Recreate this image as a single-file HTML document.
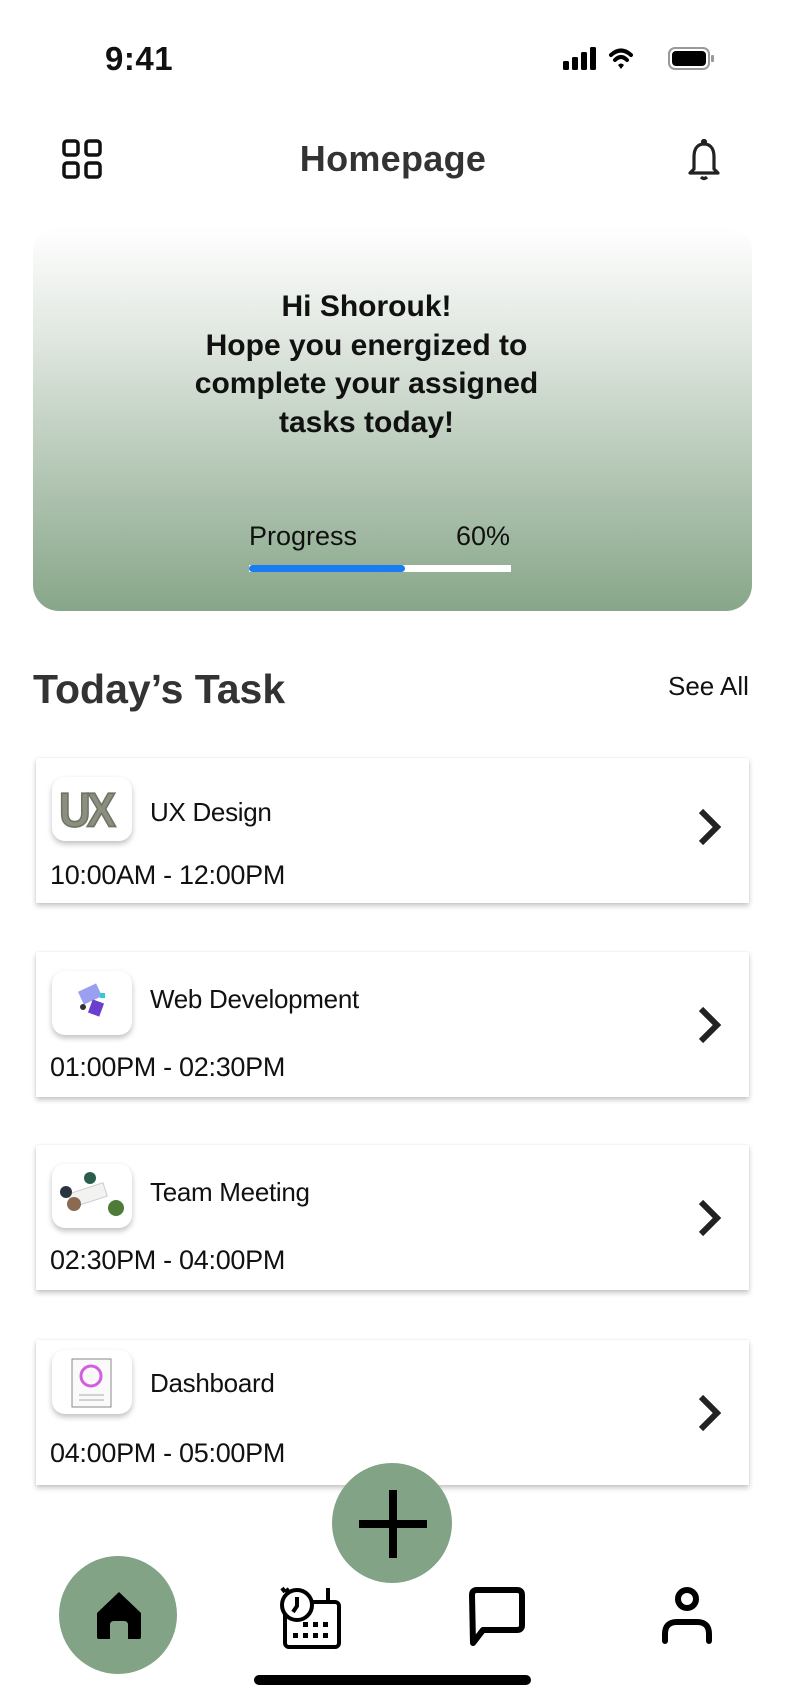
<!DOCTYPE html>
<html><head><meta charset="utf-8"><style>
*{margin:0;padding:0;box-sizing:border-box}
body{width:786px;height:1705px;background:#fff;position:relative;overflow:hidden;font-family:"Liberation Sans",sans-serif;color:#111}
.abs{position:absolute}
.hero{left:33px;top:226px;width:719px;height:385px;border-radius:26px;background:linear-gradient(180deg,#ffffff 0%,#dfe6df 30%,#b3c6b4 65%,#87a689 100%)}
.msg{left:0;width:733px;top:288px;text-align:center;font-weight:bold;font-size:30px;line-height:38.5px;color:#111}
.card{left:36px;width:713px;height:145px;background:#fff;box-shadow:0 3px 5px rgba(0,0,0,.22),0 0 2px rgba(0,0,0,.08)}
.ic{position:absolute;left:16px;top:19px;width:80px;height:64px;border-radius:13px;background:#fff;box-shadow:0 3px 6px rgba(0,0,0,.25);overflow:hidden}
.tt{position:absolute;left:114px;top:34px;font-size:26px;letter-spacing:-.3px}
.tm{position:absolute;left:14px;top:98px;font-size:27px;letter-spacing:-.3px}
.chev{position:absolute;right:26px;top:52px}
</style></head><body>
<div class="abs" style="left:105px;top:40px;font-size:33px;font-weight:bold;letter-spacing:.5px">9:41</div>
<svg class="abs" style="left:563px;top:46px" width="160" height="26" viewBox="0 0 160 26">
<rect x="0" y="15" width="6" height="9" rx="1.5" fill="#000"/><rect x="9" y="11" width="6" height="13" rx="1.5" fill="#000"/><rect x="18" y="6" width="6" height="18" rx="1.5" fill="#000"/><rect x="27" y="1" width="6" height="23" rx="1.5" fill="#000"/>
<path d="M48 9 Q58 0 68 9" stroke="#000" stroke-width="4" fill="none" stroke-linecap="round"/><path d="M52 14 Q58 8 64 14" stroke="#000" stroke-width="4" fill="none" stroke-linecap="round"/><path d="M55 19 L58 23 L61 19 Q58 16 55 19Z" fill="#000"/>
<rect x="106" y="2" width="40" height="21" rx="6" fill="none" stroke="#999" stroke-width="2"/><rect x="109" y="5" width="34" height="15" rx="4" fill="#000"/><rect x="148" y="9" width="3" height="7" rx="1" fill="#999"/>
</svg>
<svg class="abs" style="left:62px;top:139px" width="40" height="40" viewBox="0 0 40 40" fill="none" stroke="#111" stroke-width="3.5"><rect x="2" y="2" width="14" height="14" rx="3"/><rect x="24" y="2" width="14" height="14" rx="3"/><rect x="2" y="24" width="14" height="14" rx="3"/><rect x="24" y="24" width="14" height="14" rx="3"/></svg>
<div class="abs" style="left:0;width:786px;top:138px;text-align:center;font-size:36px;font-weight:bold;color:#333;letter-spacing:.3px">Homepage</div>
<svg class="abs" style="left:687px;top:139px" width="34" height="42" viewBox="0 0 34 42" fill="none" stroke="#222" stroke-width="3.2"><path d="M17 5 C9 5 7 12 7 18 L7 30 L3 34 L31 34 L27 30 L27 18 C27 12 25 5 17 5Z" stroke-linejoin="round"/><circle cx="17" cy="3" r="1.5" fill="#222"/><path d="M14 38 Q17 41 20 38"/></svg>
<div class="abs hero"></div>
<div class="abs msg">Hi Shorouk!<br>Hope you energized to<br>complete your assigned<br>tasks today!</div>
<div class="abs" style="left:249px;top:521px;font-size:27px;color:#111">Progress</div>
<div class="abs" style="left:456px;top:521px;font-size:27px;color:#111">60%</div>
<div class="abs" style="left:249px;top:565px;width:262px;height:7px;background:#fff"></div>
<div class="abs" style="left:249px;top:565px;width:156px;height:7px;background:#1a7cf2;border-radius:4px"></div>
<div class="abs" style="left:33px;top:666px;font-size:41px;font-weight:bold;color:#333">Today’s Task</div>
<div class="abs" style="left:668px;top:671px;font-size:26px;color:#111">See All</div>

<div class="abs card" style="top:758px">
<div class="ic"><svg width="80" height="64"><text x="7" y="49" font-family="Liberation Sans" font-weight="bold" font-size="44" fill="#8b8f7f" stroke="#6f7464" stroke-width="1.5" letter-spacing="-4" transform="scale(1,1.1) translate(0,-4)">UX</text></svg></div>
<div class="tt" style="top:39px">UX Design</div><div class="tm" style="top:102px">10:00AM - 12:00PM</div>
<svg class="chev" style="top:50px" width="26" height="38" viewBox="0 0 26 38"><path d="M4 3 L20 19 L4 35" stroke="#222" stroke-width="6" fill="none"/></svg></div>

<div class="abs card" style="top:952px">
<div class="ic"><svg width="80" height="64"><rect x="28" y="16" width="20" height="14" fill="#9aa0f0" transform="rotate(-25 38 23)"/><rect x="38" y="30" width="12" height="14" fill="#6a3fd0" transform="rotate(20 44 37)"/><circle cx="31" cy="36" r="3" fill="#333"/><rect x="48" y="22" width="5" height="5" fill="#3cc"/></svg></div>
<div class="tt" style="top:32px">Web Development</div><div class="tm" style="top:100px">01:00PM - 02:30PM</div>
<svg class="chev" style="top:54px" width="26" height="38" viewBox="0 0 26 38"><path d="M4 3 L20 19 L4 35" stroke="#222" stroke-width="6" fill="none"/></svg></div>

<div class="abs card" style="top:1145px">
<div class="ic"><svg width="80" height="64"><rect x="18" y="24" width="36" height="14" fill="#f2f2f0" stroke="#ccc" transform="rotate(-18 36 31)"/><circle cx="14" cy="28" r="6" fill="#2a3440"/><circle cx="38" cy="14" r="6" fill="#2b5e4a"/><circle cx="22" cy="40" r="7" fill="#8a6a50"/><circle cx="64" cy="44" r="8" fill="#4e7a3a"/></svg></div>
<div class="tt" style="top:32px">Team Meeting</div><div class="tm" style="top:100px">02:30PM - 04:00PM</div>
<svg class="chev" style="top:54px" width="26" height="38" viewBox="0 0 26 38"><path d="M4 3 L20 19 L4 35" stroke="#222" stroke-width="6" fill="none"/></svg></div>

<div class="abs card" style="top:1340px">
<div class="ic" style="top:10px"><svg width="80" height="64"><rect x="20" y="9" width="39" height="48" fill="#fafafa" stroke="#888"/><circle cx="39" cy="26" r="10" fill="none" stroke="#d45ee0" stroke-width="3"/><line x1="27" y1="45" x2="52" y2="45" stroke="#aaa"/><line x1="27" y1="50" x2="52" y2="50" stroke="#aaa"/></svg></div>
<div class="tt" style="top:28px">Dashboard</div><div class="tm" style="top:98px">04:00PM - 05:00PM</div>
<svg class="chev" style="top:54px" width="26" height="38" viewBox="0 0 26 38"><path d="M4 3 L20 19 L4 35" stroke="#222" stroke-width="6" fill="none"/></svg></div>

<div class="abs" style="left:332px;top:1463px;width:120px;height:120px;border-radius:50%;background:#82a386"></div>
<svg class="abs" style="left:357px;top:1488px" width="72" height="72" viewBox="0 0 72 72"><path d="M36 2 V70 M2 36 H70" stroke="#000" stroke-width="8"/></svg>
<div class="abs" style="left:59px;top:1556px;width:118px;height:118px;border-radius:50%;background:#82a386"></div>
<svg class="abs" style="left:95px;top:1591px" width="48" height="50" viewBox="0 0 48 50"><path d="M24 1 L46 22 V46 Q46 48 44 48 H33 V34 Q33 30 29 30 H19 Q15 30 15 34 V48 H4 Q2 48 2 46 V22 Z" fill="#000"/></svg>
<svg class="abs" style="left:276px;top:1584px" width="66" height="66" viewBox="0 0 66 66" fill="none" stroke="#000" stroke-width="4"><rect x="9" y="18" width="54" height="45" rx="4"/><circle cx="21" cy="21" r="15" fill="#fff"/><path d="M21 13 V22 L17 28"/><path d="M9 8 L6 4 M9 8 L13 5"/><path d="M52 4 V18"/><g fill="#000" stroke="none"><rect x="27" y="38" width="5" height="5"/><rect x="37" y="38" width="5" height="5"/><rect x="47" y="38" width="5" height="5"/><rect x="17" y="49" width="5" height="5"/><rect x="27" y="49" width="5" height="5"/><rect x="37" y="49" width="5" height="5"/><rect x="47" y="49" width="5" height="5"/></g></svg>
<svg class="abs" style="left:468px;top:1587px" width="58" height="60" viewBox="0 0 58 60"><path d="M4 8 Q4 3 9 3 H49 Q54 3 54 8 V38 Q54 43 49 43 H15 L5 56 Z" fill="none" stroke="#000" stroke-width="6" stroke-linejoin="round"/></svg>
<svg class="abs" style="left:660px;top:1585px" width="54" height="60" viewBox="0 0 54 60" fill="none" stroke="#000" stroke-width="6" stroke-linecap="round"><circle cx="27" cy="14" r="9"/><path d="M5 56 V49 Q5 37 17 37 H37 Q49 37 49 49 V56"/></svg>
<div class="abs" style="left:254px;top:1675px;width:277px;height:10px;border-radius:5px;background:#000"></div>
</body></html>
